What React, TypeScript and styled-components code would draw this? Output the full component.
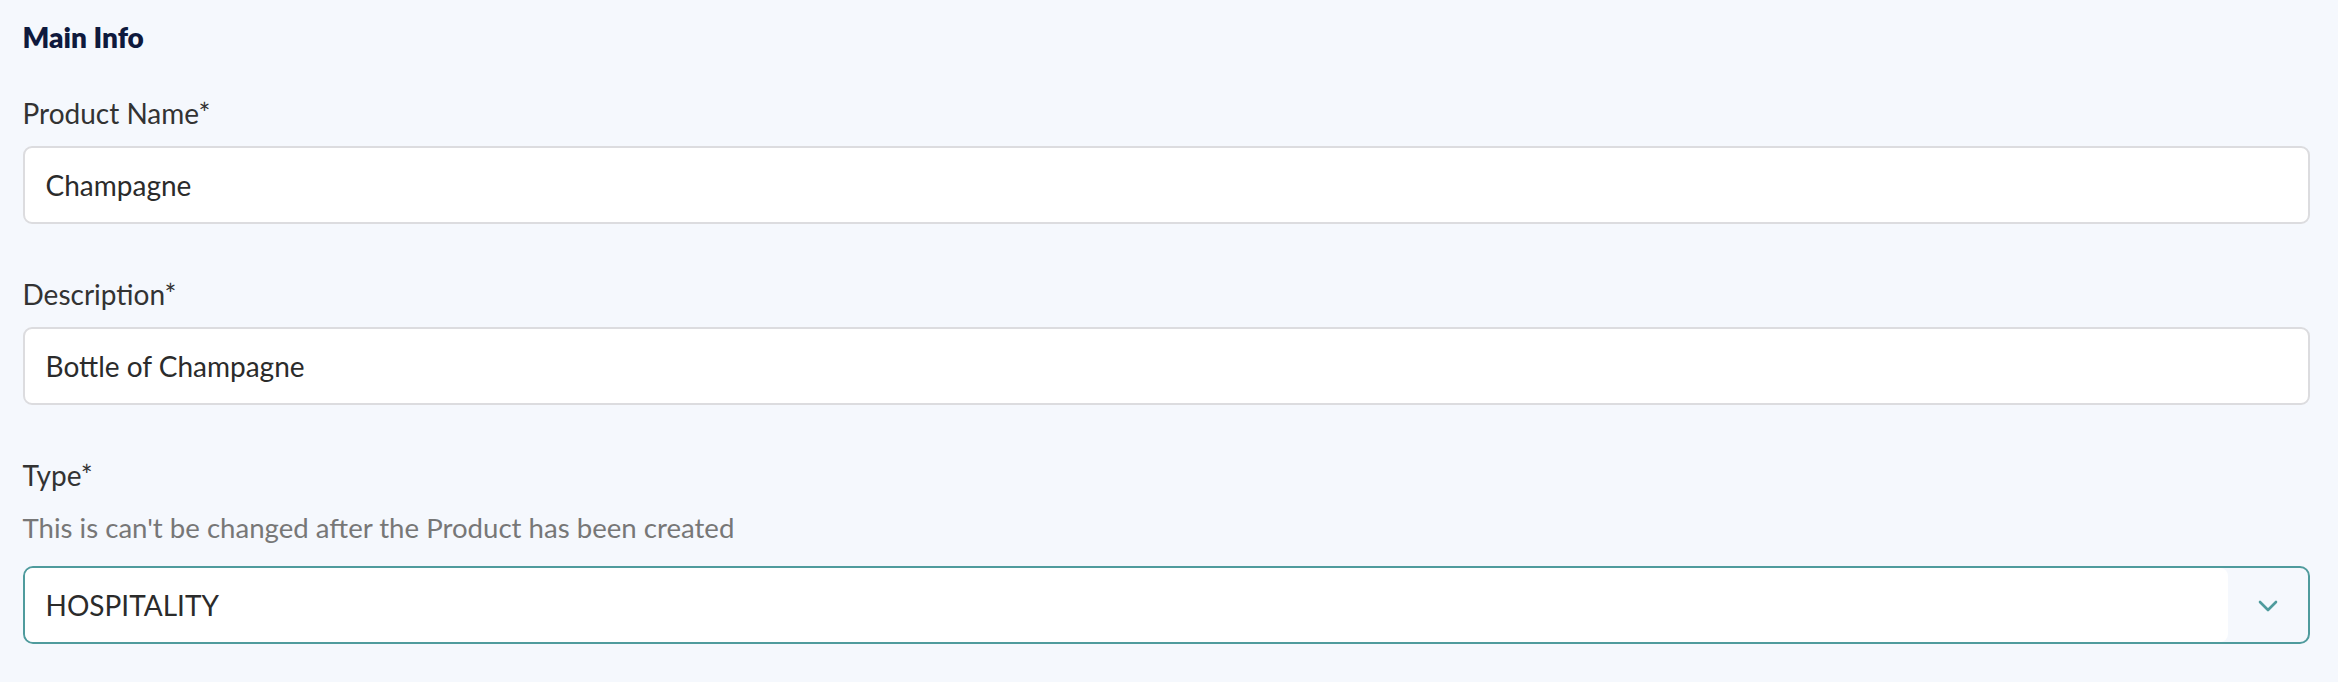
import React from 'react';
import styled, { createGlobalStyle } from 'styled-components';

const GlobalStyle = createGlobalStyle`
  html, body {
    margin: 0;
    padding: 0;
    background: #f5f8fd;
  }

  body {
    font-family: Lato, 'Open Sans', sans-serif;
  }

  * {
    box-sizing: border-box;
  }
`;

const TypeOptions = ['HOSPITALITY', 'RETAIL', 'SERVICE'];

const App = () => {
  const [name, setName] = React.useState('Champagne');
  const [description, setDescription] = React.useState('Bottle of Champagne');

  return (
    <>
      <GlobalStyle />
      <Page>
        <Heading>Main Info</Heading>

        <Fields>
          <Field>
            <Label htmlFor='product-name'>Product Name*</Label>
            <TextInput
              id='product-name'
              value={name}
              onChange={(e) => setName(e.target.value)}
            />
          </Field>

          <Field>
            <Label htmlFor='product-description'>Description*</Label>
            <TextInput
              id='product-description'
              value={description}
              onChange={(e) => setDescription(e.target.value)}
            />
          </Field>

          <Field>
            <Label>Type*</Label>
            <Hint>This is can't be changed after the Product has been created</Hint>
            <SelectBox>
              <SelectValue>{TypeOptions[0]}</SelectValue>
              <SelectToggle>
                <svg width='20' height='12' viewBox='0 0 20 12' fill='none'>
                  <path
                    d='M2 2L10 10L18 2'
                    stroke='#4f9b9d'
                    strokeWidth='2.6'
                    strokeLinecap='round'
                    strokeLinejoin='round'
                  />
                </svg>
              </SelectToggle>
            </SelectBox>
          </Field>
        </Fields>
      </Page>
    </>
  );
};

export default App;

const Page = styled.main`
  display: flex;
  flex-direction: column;
  min-height: 682px;
  padding: 17px 28px 0 22.5px;
  background: #f5f8fd;
`;

const Heading = styled.h2`
  margin: 0 0 36px 0;
  font-size: 28px;
  line-height: 40px;
  font-weight: 800;
  color: #0f1a3d;
`;

const Fields = styled.div`
  display: flex;
  flex-direction: column;
  gap: 50px;
`;

const Field = styled.div`
  display: flex;
  flex-direction: column;
  gap: 12.5px;
`;

const Label = styled.label`
  font-size: 28px;
  line-height: 40px;
  color: #333333;
`;

const Hint = styled.p`
  margin: 0 0 5.5px 0;
  font-size: 27.6px;
  line-height: 40px;
  color: #777777;
`;

const TextInput = styled.input`
  width: 100%;
  height: 78.5px;
  padding: 0 21px;
  border: 2px solid #dcdcdf;
  border-radius: 9px;
  background: #ffffff;
  font-family: inherit;
  font-size: 28px;
  color: #2b2b2b;
  outline: none;
`;

const SelectBox = styled.div`
  display: flex;
  height: 78.5px;
  border: 2px solid #4f9b9d;
  border-radius: 10px;
  background: #f5f8fd;
  overflow: hidden;
`;

const SelectValue = styled.div`
  display: flex;
  flex: 1;
  align-items: center;
  padding: 0 21px;
  border-radius: 8px;
  background: #ffffff;
  font-size: 28px;
  color: #2b2b2b;
`;

const SelectToggle = styled.div`
  display: flex;
  justify-content: center;
  align-items: center;
  width: 80px;
  padding-top: 2px;
`;
